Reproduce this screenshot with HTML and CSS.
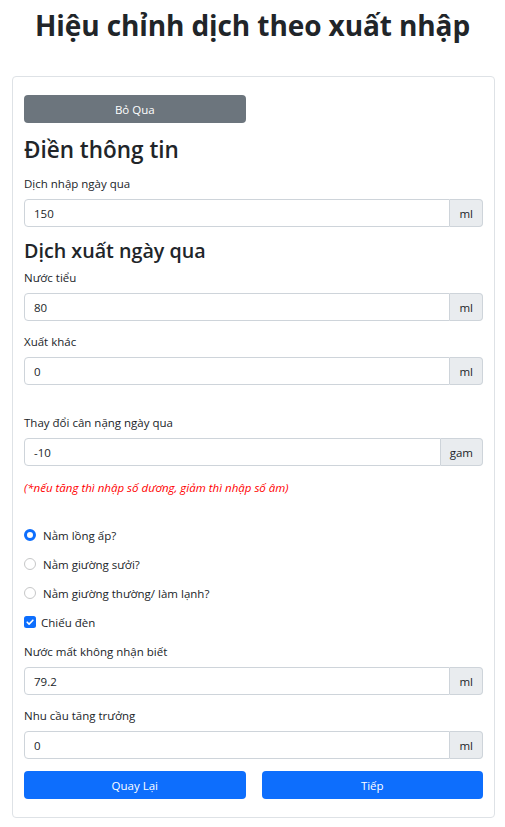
FILE: index.html
```html
<!DOCTYPE html>
<html lang="vi">
<head>
<meta charset="utf-8">
<title>Hiệu chỉnh dịch theo xuất nhập</title>
<link rel="stylesheet" href="styles.css">
</head>
<body>
<h1 class="title">Hiệu chỉnh dịch theo xuất nhập</h1>
<div class="card">
  <div class="row">
    <button class="btn btn-secondary">Bỏ Qua</button>
    <span class="spacer"></span>
  </div>
  <h3 class="heading heading-1">Điền thông tin</h3>
  <label class="label">Dịch nhập ngày qua</label>
  <div class="input-group">
    <div class="form-control">150</div>
    <span class="addon">ml</span>
  </div>
  <h3 class="heading heading-2">Dịch xuất ngày qua</h3>
  <label class="label">Nước tiểu</label>
  <div class="input-group mb">
    <div class="form-control">80</div>
    <span class="addon">ml</span>
  </div>
  <label class="label">Xuất khác</label>
  <div class="input-group">
    <div class="form-control">0</div>
    <span class="addon">ml</span>
  </div>
  <label class="label label-gap">Thay đổi cân nặng ngày qua</label>
  <div class="input-group">
    <div class="form-control">-10</div>
    <span class="addon">gam</span>
  </div>
  <p class="note">(*nếu tăng thì nhập số dương, giảm thì nhập số âm)</p>
  <div class="checks">
    <div class="check"><span class="radio checked"></span><span class="check-label">Nằm lồng ấp?</span></div>
    <div class="check"><span class="radio"></span><span class="check-label">Nằm giường sưởi?</span></div>
    <div class="check"><span class="radio"></span><span class="check-label">Nằm giường thường/ làm lạnh?</span></div>
    <div class="check"><span class="checkbox"><svg viewBox="0 0 12 12" width="12" height="12"><path d="M3.2 6.2l1.9 1.9 3.8-3.9" fill="none" stroke="#fff" stroke-width="1.6" stroke-linecap="round" stroke-linejoin="round"/></svg></span><span class="check-label">Chiếu đèn</span></div>
  </div>
  <label class="label label-after-checks">Nước mất không nhận biết</label>
  <div class="input-group mb">
    <div class="form-control">79.2</div>
    <span class="addon">ml</span>
  </div>
  <label class="label">Nhu cầu tăng trưởng</label>
  <div class="input-group">
    <div class="form-control">0</div>
    <span class="addon">ml</span>
  </div>
  <div class="row bottom-row">
    <button class="btn btn-primary">Quay Lại</button>
    <button class="btn btn-primary">Tiếp</button>
  </div>
</div>
</body>
</html>
```
FILE: styles.css
```css
* { box-sizing: border-box; }
body {
  margin: 0;
  font-family: "Open Sans", "Noto Sans", sans-serif;
  font-size: 11.5px;
  color: #212529;
  background: #fff;
}
.title {
  margin: 7px 0 0;
  text-align: center;
  font-size: 28px;
  font-weight: 700;
  line-height: 36px;
  letter-spacing: -0.1px;
}
.card {
  margin: 33px 10px 0 12px;
  border: 1px solid #dee2e6;
  border-radius: 4px;
  padding: 18px 11px 18px 11px;
  display: flex;
  flex-direction: column;
}
.row {
  display: flex;
  gap: 16px;
}
.row > * { flex: 1 1 0; }
.btn {
  height: 28px;
  border: none;
  border-radius: 4px;
  font-family: inherit;
  font-size: 11.5px;
  color: #fff;
  padding: 0;
}
.btn-secondary { background: #6c757d; }
.btn-primary { background: #0d6efd; }
.heading {
  margin: 0;
  font-weight: 600;
  line-height: 25px;
}
.heading-1 {
  font-size: 22.5px;
  margin-top: 14px;
  margin-bottom: 13px;
}
.heading-2 {
  font-size: 19.7px;
  margin-top: 11px;
  margin-bottom: 6px;
}
.label {
  display: block;
  line-height: 18px;
  margin: 0 0 6px;
}
.input-group {
  display: flex;
  height: 28px;
}
.input-group.mb { margin-bottom: 12px; }
.label-gap { margin-top: 29px; }
.form-control {
  flex: 1;
  border: 1px solid #ced4da;
  border-radius: 4px 0 0 4px;
  padding: 0 9px;
  display: flex;
  align-items: center;
  background: #fff;
}
.addon {
  display: flex;
  align-items: center;
  padding: 0 9px;
  background: #e9ecef;
  border: 1px solid #ced4da;
  border-left: none;
  border-radius: 0 4px 4px 0;
}
.note {
  margin: 13px 0 0;
  color: #ff0000;
  font-style: italic;
  font-size: 11.5px;
  line-height: 18px;
}
.checks {
  margin-top: 29px;
  display: flex;
  flex-direction: column;
  gap: 11px;
}
.check {
  display: flex;
  align-items: center;
  height: 18px;
}
.radio {
  width: 12px;
  height: 12px;
  border-radius: 50%;
  border: 1px solid #c6c7c8;
  margin-right: 7px;
  flex: none;
}
.radio.checked {
  border: 3.5px solid #0d6efd;
  background: #fff;
}
.checkbox {
  width: 12px;
  height: 12px;
  border-radius: 2.5px;
  background: #0d6efd;
  margin-right: 5px;
  display: flex;
  flex: none;
}
.label-after-checks { margin-top: 12px; }
.bottom-row { margin-top: 12px; }
```
